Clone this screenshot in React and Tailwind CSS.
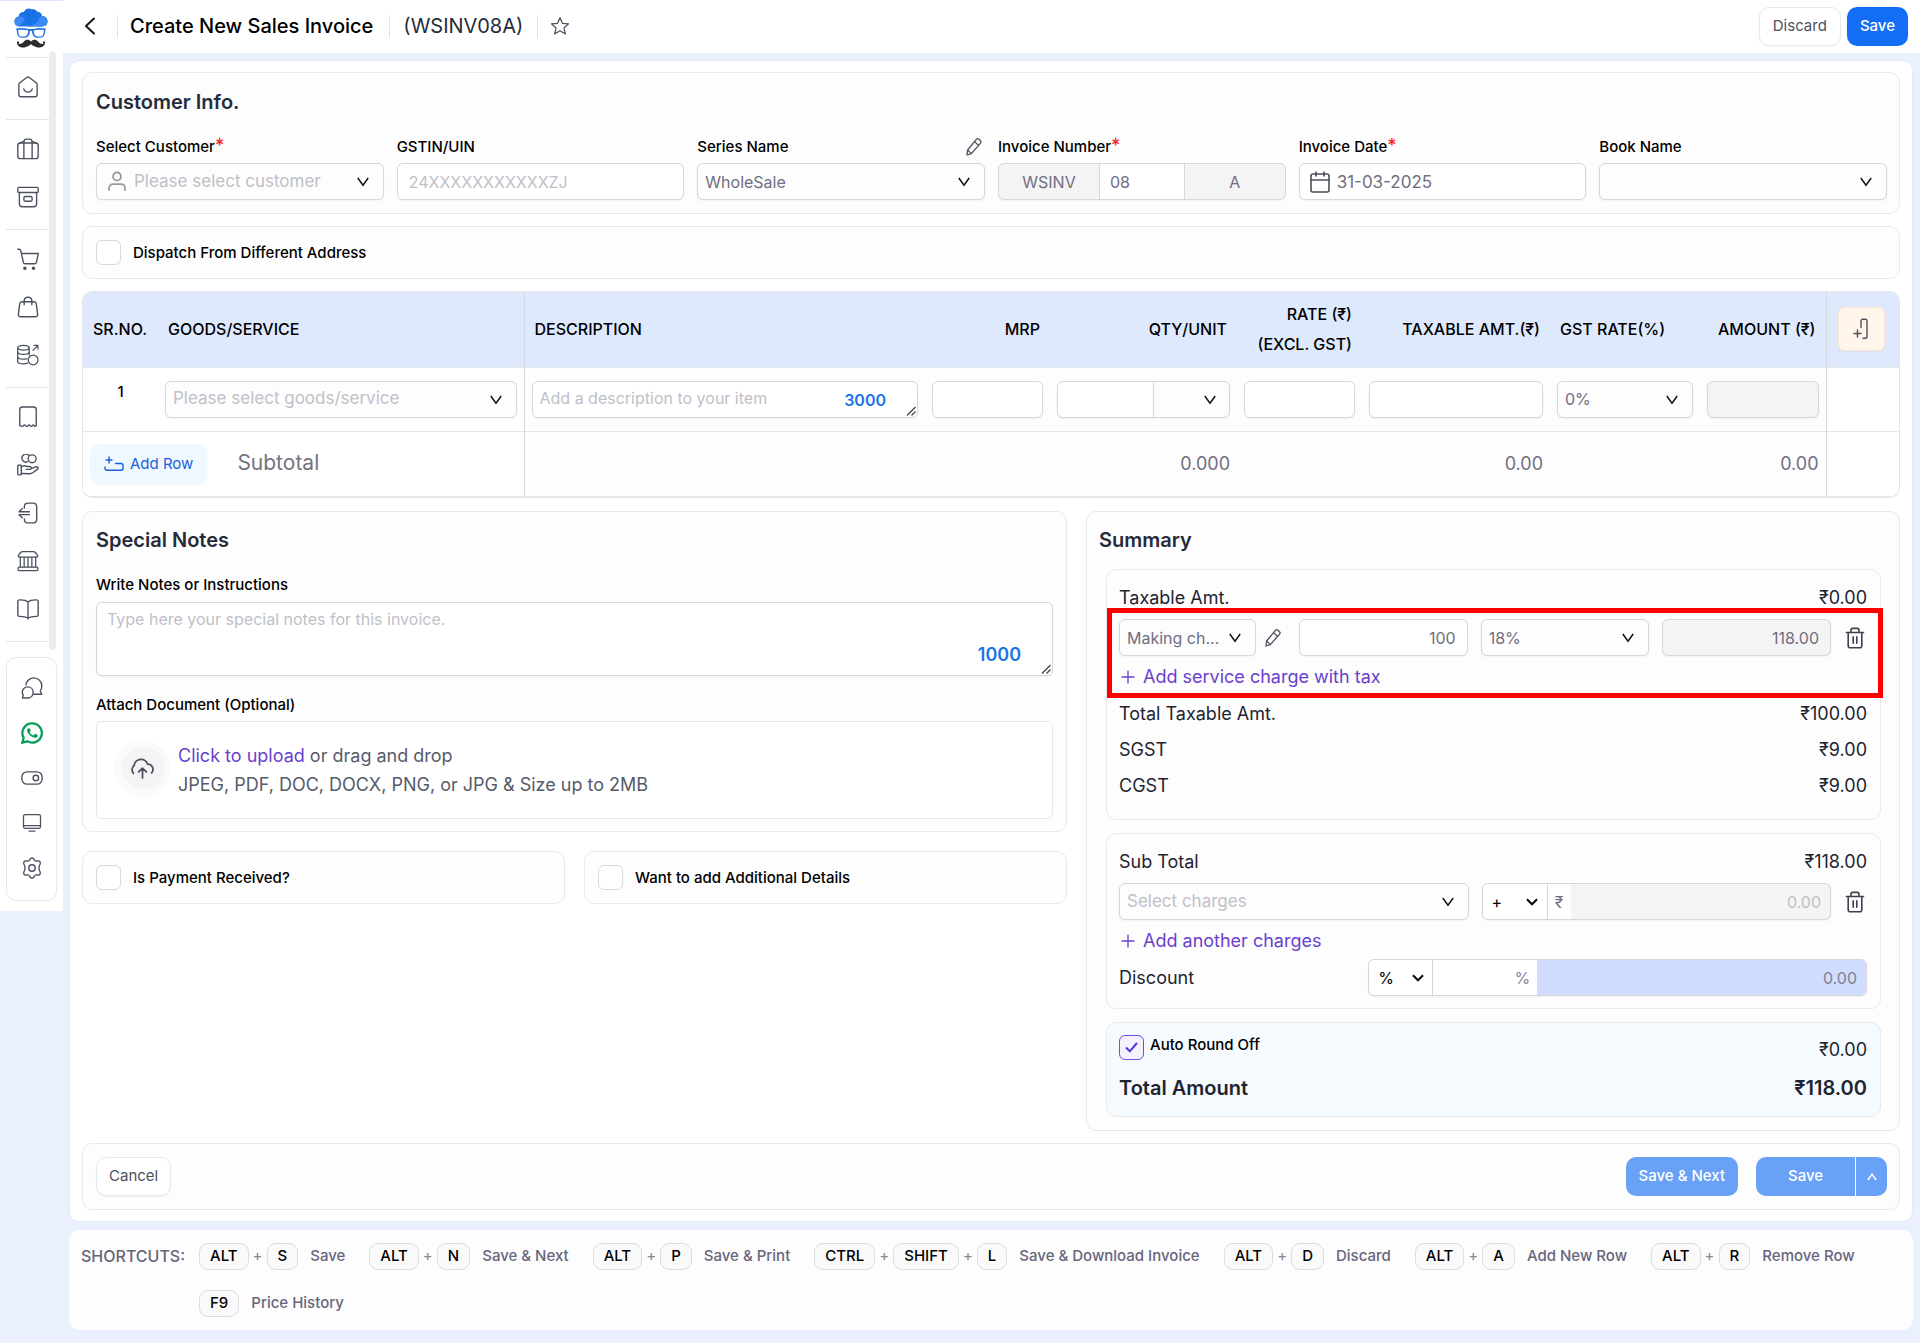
import React from "react";

/* ---------- icons ---------- */

function Icon({ size = 22, sw = 1.5, className = "", children }) {
  return (
    <svg
      width={size}
      height={size}
      viewBox="0 0 24 24"
      fill="none"
      stroke="currentColor"
      strokeWidth={sw}
      strokeLinecap="round"
      strokeLinejoin="round"
      className={className}
      aria-hidden="true"
    >
      {children}
    </svg>
  );
}

const HomeIcon = () => (
  <Icon>
    <path d="M2 9.600c0-.9.4-1.600 1.100-2.200L10.600 1.600c.9-.7 1.900-.7 2.800 0l7.500 5.800c.7.6 1.100 1.300 1.100 2.200v10.600c0 1.500-1 2.400-2.400 2.400H4.400C3 22.600 2 21.700 2 20.200z" />
    <path d="M7.400 14c.6 2.200 2.300 3.600 4.600 3.600s4-1.400 4.600-3.600" />
  </Icon>
);
const LuggageIcon = () => (
  <Icon>
    <rect x="0.900" y="5.500" width="22.200" height="17" rx="2.600" />
    <path d="M7.500 22.500V4.200C7.500 2.500 8.700 1.200 10.400 1.200h3.200c1.700 0 2.900 1.300 2.900 3v18.300" />
    <path d="M3.500 5.500c1-1 2.500-1.500 4-1.500M20.500 5.500c-1-1-2.500-1.500-4-1.500" />
  </Icon>
);
const ArchiveIcon = () => (
  <Icon>
    <rect x="0.900" y="1.500" width="22.200" height="5.600" rx="1" />
    <path d="M2.600 7.100v12.300c0 2 1.200 3.300 3.200 3.300h12.400c2 0 3.200-1.300 3.200-3.300V7.100" />
    <rect x="7.500" y="11.500" width="9" height="5.200" rx="1.600" />
  </Icon>
);
const CartIcon = () => (
  <Icon>
    <path d="M.8 1.400h1.700c.8 0 1.300.4 1.500 1.200l3 13c.2 1 .9 1.600 2 1.600h10.300c1 0 1.700-.6 1.900-1.600l2-9.600H4.900" />
    <circle cx="8.600" cy="22" r="1.200" fill="currentColor" />
    <circle cx="18" cy="22" r="1.200" fill="currentColor" />
  </Icon>
);
const BagIcon = () => (
  <Icon>
    <path d="M5.500 6.300h13c1.300 0 2.200.8 2.500 2.100l1.500 11.300c.2 1.800-.8 3-2.600 3H4.100c-1.800 0-2.800-1.200-2.600-3L3 8.400c.3-1.300 1.200-2.100 2.500-2.100z" />
    <path d="M7.800 9.500V5.600c0-2.500 1.700-4.300 4.200-4.300s4.200 1.800 4.200 4.300v3.900" />
  </Icon>
);
const CoinsIcon = () => (
  <Icon sw={1.4}>
    <ellipse cx="7" cy="4" rx="6.300" ry="2.600" />
    <path d="M.7 4v4.800c0 1.500 2.800 2.600 6.300 2.600s6.300-1.100 6.300-2.600V4" />
    <path d="M.7 9v5c0 1.500 2.800 2.600 6.300 2.600 1.400 0 2.700-.2 3.800-.5M13.300 9v3" />
    <path d="M.7 14v5c0 1.500 2.800 2.600 6.300 2.600 1.700 0 3.300-.3 4.500-.8" />
    <circle cx="17.600" cy="17.400" r="5.300" />
    <path d="M17.500 7l5-5.200M18.600 1.400h4.200v4" />
  </Icon>
);
const ReceiptIcon = () => (
  <Icon>
    <path d="M3 21.500V4c0-1.700 1.200-2.900 2.900-2.900h12.200C19.800 1.100 21 2.300 21 4v17.500c-.8.800-1.700.7-2.300-.2-.5-.7-1.500-.7-2 0-.8 1.300-2 1.300-2.700 0-.5-.8-1.500-.8-2 0-.8 1.300-2 1.300-2.700 0-.5-.7-1.400-.7-2 0-.9 1.400-2.200 1.200-4.300.2z" />
  </Icon>
);
const HandCoinsIcon = () => (
  <Icon>
    <path d="M11.500 8.400A4.300 4.300 0 1 1 13 1.700" />
    <circle cx="16.500" cy="5.200" r="4.300" />
    <rect x="0.800" y="12.300" width="3.900" height="10.500" rx="0.800" />
    <path d="M4.700 14.200c2-1.800 4-1.800 5.800-.6h3.300c2.200 0 2.300 3.200 0 3.200H10M15.400 16l4.900-1.900c2.300-.9 3.600 1.300 1.800 2.700l-4.500 3.400c-1.400 1-2.800 1.400-4.500 1.300l-8.400-.2" />
  </Icon>
);
const LogoutIcon = () => (
  <Icon>
    <path d="M8 6.500V5.300c0-2.500 1.700-4.100 4.200-4.100h5.100c2.500 0 4.200 1.600 4.200 4.100v13.400c0 2.500-1.700 4.100-4.200 4.100h-5.100c-2.500 0-4.200-1.600-4.200-4.100v-.2" />
    <path d="M13.500 10.600H2.200L5.800 7.200M13.500 13.800H2.200l3.600 3.400" />
  </Icon>
);
const BankIcon = () => (
  <Icon sw={1.4}>
    <path d="M1.500 5.800 4 2.700c.6-.7 1.200-1 2-1h12c.8 0 1.400.3 2 1l2.500 3.100c.6.900.2 1.900-.9 1.900H2.400c-1.100 0-1.500-1-.9-1.900z" />
    <rect x="1.200" y="18.600" width="21.600" height="3.900" rx="1.200" />
    <path d="M3.600 7.700v10.900M7.800 8v10.500M12 8v10.500M16.200 8v10.500M20.400 7.700v10.900" />
  </Icon>
);
const BookIcon = () => (
  <Icon>
    <path d="M12 4.500v18.300M12 4.500C10 2.600 6.500 1.900 2.500 2.100 1.500 2.200.9 2.900.9 3.800v14.700c0 .9.700 1.500 1.600 1.500 4.300.1 7.500.6 9.500 2.200 2-1.600 5.200-2.100 9.500-2.200.9 0 1.600-.6 1.600-1.500V3.800c0-.9-.6-1.600-1.600-1.700C17.500 1.900 14 2.600 12 4.500z" />
  </Icon>
);
const ChatIcon = () => (
  <Icon>
    <path d="M5.400 8.600C6 4.200 9.700 1 14 1c5 0 8.700 4 8.700 8.800 0 2.200-.5 4-1.700 5.700l1.800 3.300h-9" />
    <path d="M7.300 10.800c3.400 0 6 2.500 6 5.900 0 3.500-2.500 6.200-6 6.200H1.600l.8-3.300c-.7-.9-1-1.900-1-3 0-3.300 2.600-5.800 5.900-5.800z" />
  </Icon>
);
const WhatsappIcon = () => (
  <svg width="22" height="22" viewBox="0 0 24 24" aria-hidden="true">
    <path
      d="M12 1.500a10.500 10.500 0 0 0-9.100 15.700L1.500 22.500l5.500-1.400A10.500 10.500 0 1 0 12 1.500z"
      fill="none"
      stroke="#0a9f58"
      strokeWidth="2.500"
    />
    <path
      d="M8.700 6.700c.5-.1.8.1 1 .6l.8 1.900c.1.400 0 .7-.8 1.600-.3.300-.2.600 0 .9.800 1.300 1.900 2.200 3.300 2.800.4.200.7.100.9-.1l1-1.200c.3-.4.6-.4 1-.2l1.900.9c.5.300.6.500.5 1-.2 1.600-1.700 2.500-3.100 2.400-3.500-.4-7.900-4.100-8.600-7.700-.2-1.200.7-2.700 2.100-2.900z"
      fill="#0a9f58"
    />
  </svg>
);
const ToggleIcon = () => (
  <Icon>
    <rect x="1" y="5.300" width="22" height="13.400" rx="5.500" />
    <circle cx="16.200" cy="12" r="3" />
  </Icon>
);
const MonitorIcon = () => (
  <Icon size={20}>
    <rect x="1.800" y="2" width="20.400" height="16.500" rx="2" />
    <path d="M2 15.200h20M8.500 21.800h7" />
  </Icon>
);
const GearIcon = () => (
  <Icon>
    <circle cx="12" cy="12" r="3.500" />
    <path d="M9.800 2.300c1-1.700 3.400-1.700 4.400 0l.4.800c.6 1 1.700 1.500 2.900 1.300l1-.1c2-.2 3.200 1.800 2.300 3.600l-.7 1.400c-.5 1.200-.5 4.200 0 5.400l.7 1.400c.9 1.800-.3 3.800-2.300 3.600l-1-.1c-1.200-.2-2.300.3-2.900 1.300l-.4.800c-1 1.700-3.400 1.700-4.400 0l-.4-.8c-.6-1-1.700-1.500-2.900-1.300l-1 .1c-2 .2-3.200-1.800-2.300-3.600l.7-1.400c.5-1.200.5-4.200 0-5.400l-.7-1.400c-.9-1.800.3-3.800 2.300-3.600l1 .1c1.200.2 2.300-.3 2.900-1.300z" />
  </Icon>
);
const PencilIcon = () => (
  <svg width="18" height="20" viewBox="0 0 18 20" fill="none" stroke="#4b5160" strokeWidth="1.300" strokeLinejoin="round" aria-hidden="true">
    <path d="M11.600 2.200c.7-.7 1.700-.7 2.400 0l1.500 1.500c.7.700.7 1.700.1 2.400L6.400 16.600 2 18l.6-5z" />
    <path d="M9.600 4.600l4 3.900M6.400 16.600 2.600 13" />
  </svg>
);
const TrashIcon = () => (
  <svg width="20" height="22" viewBox="0 0 20 22" fill="none" stroke="#3c4250" strokeWidth="1.600" strokeLinecap="round" strokeLinejoin="round" aria-hidden="true">
    <path d="M1.500 5.500h17M3.200 5.500v13.200c0 1.200.8 2 2 2h9.600c1.200 0 2-.8 2-2V5.500" />
    <path d="M6 5.500V3.300c0-1.100.8-1.900 1.900-1.900h4.200c1.100 0 1.900.8 1.900 1.900v2.200M8.200 9.700v6.600M11.800 9.700v6.600" />
  </svg>
);
const Chevron = ({ className = "" }) => (
  <svg width="12" height="10" viewBox="0 0 12 10" fill="none" stroke="#111" strokeWidth="1.500" className={className} aria-hidden="true">
    <path d="M.8 1 6 8.200 11.200 1" />
  </svg>
);
const BoldChevron = ({ className = "" }) => (
  <svg width="12" height="8" viewBox="0 0 12 8" fill="none" stroke="#111" strokeWidth="2.200" className={className} aria-hidden="true">
    <path d="M1 1.200 6 6.200 11 1.200" />
  </svg>
);
const PlusIcon = () => (
  <svg width="14" height="14" viewBox="0 0 14 14" stroke="currentColor" strokeWidth="1.300" aria-hidden="true">
    <path d="M7 .5v13M.5 7h13" />
  </svg>
);
const Grip = () => (
  <svg width="10" height="10" viewBox="0 0 10 10" stroke="#444" strokeWidth="1.300" className="pointer-events-none absolute right-[2px] bottom-[2px] bg-white" aria-hidden="true">
    <path d="M1 9.500 9.500 1M5.500 9.500l4-4" />
  </svg>
);

const Logo = () => (
  <svg width="34" height="41" viewBox="0 0 34 41" aria-label="Logo" role="img">
    <path d="M6 18.500C2 18.500.5 16 .5 13.500c0-2.500 1.500-4.500 4-5C5 5 7.500 3.500 10 4c1.500-3.500 5-4.300 7.500-2.500 2-.8 4.500 0 5.500 2 3 .2 5 2 5 4.500 3.500 0 5.500 2.500 5.500 5.300 0 3.200-2 5.200-5.500 5.200z" fill="#1a73e8" />
    <path d="M4.500 8.500c3-.5 5 .5 6.500 3l-6 7C2 18 .5 16 .5 13.500c0-2.500 1.500-4.500 4-5z" fill="#3b8bf0" />
    <path d="M28 8c3.500 0 5.500 2.500 5.500 5.300 0 3.200-2 5.200-5.500 5.200H13c6-1 9.500-2.500 11-6 1-2.500 2-4 4-4.500z" fill="#3b8bf0" />
    <path d="M10 4c3 0 5 2 5.500 5" stroke="#0d5bd0" strokeWidth="0.800" fill="none" />
    <path d="M17.500 1.500c2 1.500 2.500 4 1.500 7.500" stroke="#0d5bd0" strokeWidth="0.800" fill="none" />
    <path d="M2 20.500c4-.8 8.500-.8 12.500.5h5c4-1.300 8.500-1.300 12.500-.5l-.8 2.600c-.3 4.400-1.700 6.700-5.200 6.700h-2.200c-3.500 0-5.500-2.200-5.900-6.800h-1.800c-.4 4.600-2.400 6.800-5.900 6.800H8c-3.500 0-4.900-2.300-5.200-6.700z" fill="#2176e8" />
    <path d="M4.200 22c3.400-.5 7-.4 10.100.5-.2 4.300-2 6.100-4.500 6.100H8C5.200 28.600 4.200 26.300 4.200 22zM29.800 22c-3.400-.5-7-.4-10.100.5.2 4.300 2 6.100 4.500 6.100H26c2.800 0 3.800-2.300 3.800-6.600z" fill="#fff" />
    <path d="M17 33.400c-2-2.200-5.200-2.200-7 0-1.600 2-4 3-5.800 1.800 1-.3 1.200-1.200.5-1.800-.9-.6-2 .2-1.700 1.800.5 3 4 4.700 7.500 4.200 3-.4 5-1.700 6.500-3.300 1.500 1.600 3.500 2.900 6.500 3.300 3.500.5 7-1.200 7.500-4.200.3-1.600-.8-2.400-1.700-1.800-.7.600-.5 1.500.5 1.800-1.800 1.200-4.200.2-5.800-1.800-1.800-2.200-5-2.200-7 0z" fill="#2b2b30" />
  </svg>
);

/* ---------- form parts ---------- */

const BOX = "h-[37px] rounded-md border border-[#d6d6dc] shadow-xs outline-none";

function TextBox({ className = "", bg = "bg-white", size = "text-base", ...props }) {
  return (
    <input
      type="text"
      className={`${BOX} ${bg} ${size} w-full min-w-0 px-[11px] text-[#706e82] placeholder:text-[#c0c0c9] ${className}`}
      {...props}
    />
  );
}

function SelectBox({ id, label, value, placeholder, className = "", padding = "pl-[7px]" }) {
  return (
    <div className={`relative ${className}`}>
      <select
        id={id}
        aria-label={label}
        defaultValue="v"
        className={`${BOX} w-full appearance-none bg-[#fdfdfd] pr-8 ${padding} ${placeholder ? "text-[17px] text-[#c0c0c9]" : "text-base text-[#706e82]"}`}
      >
        <option value="v">{value || placeholder}</option>
      </select>
      <Chevron className="pointer-events-none absolute top-[14px] right-[15px]" />
    </div>
  );
}

function Label({ htmlFor, children, required }) {
  return (
    <label htmlFor={htmlFor} className="text-[15px] leading-[22px] font-medium text-black">
      {children}
      {required && <span className="text-lg leading-[18px] text-[#ff1a1a]">*</span>}
    </label>
  );
}

function CheckCard({ id, children }) {
  return (
    <div className="flex h-[53px] items-center gap-3 rounded-[10px] border border-[#e9e9ec] bg-[#fdfdfd] px-[13px]">
      <input id={id} type="checkbox" className="size-[25px] shrink-0 appearance-none rounded-md border border-[#d8d8dd] bg-white" />
      <Label htmlFor={id}>{children}</Label>
    </div>
  );
}

const Title = ({ children, className = "" }) => (
  <h2 className={`text-xl leading-7 font-semibold text-[#262b3a] ${className}`}>{children}</h2>
);

/* ---------- page parts ---------- */

const groups = [
  [["Home", HomeIcon]],
  [["Products", LuggageIcon], ["Inventory", ArchiveIcon]],
  [["Sales", CartIcon], ["Purchase", BagIcon], ["Payments", CoinsIcon]],
  [["Receipts", ReceiptIcon], ["Expenses", HandCoinsIcon], ["Returns", LogoutIcon], ["Bank", BankIcon], ["Ledger", BookIcon]],
];
const tools = [["Chat", ChatIcon], ["WhatsApp", WhatsappIcon], ["Switch", ToggleIcon], ["Display", MonitorIcon], ["Settings", GearIcon]];

function Sidebar() {
  return (
    <aside className="w-[63px] shrink-0 self-start border-t border-[#dfe8fb] bg-white pb-[10px] text-[#4b5160]">
      <a href="#" className="ml-[14px] flex h-[50px] items-center pt-1" aria-label="Home page">
        <Logo />
      </a>
      <nav className="ml-1.5 flex">
        <div className="w-[43px] pt-1.5 pb-2">
          {groups.map((g, i) => (
            <div key={i} className="border-t border-[#e4e4e7] pt-[5px] pb-2">
              {g.map(([name, I]) => (
                <a key={name} href="#" aria-label={name} className="flex h-12 items-center justify-center">
                  <I />
                </a>
              ))}
            </div>
          ))}
          <div className="border-t border-[#e4e4e7]" />
        </div>
        <div className="w-[7px] rounded-full bg-[#ececec]" />
      </nav>
      <div className="mx-1.5 mt-[7px] rounded-[10px] border border-[#e9e9ec] pt-[7px] pb-2.5">
        {tools.map(([name, I]) => (
          <button key={name} type="button" aria-label={name} className="flex h-[45px] w-full items-center justify-center">
            <I />
          </button>
        ))}
      </div>
    </aside>
  );
}

function Header() {
  return (
    <header className="flex h-[53px] items-center bg-white pr-3 pb-px pl-[20px]">
      <button type="button" aria-label="Back" className="flex w-[14px] justify-center">
        <svg width="12" height="18" viewBox="0 0 12 18" fill="none" stroke="#15171e" strokeWidth="2" strokeLinecap="round" strokeLinejoin="round">
          <path d="M10 1.500 2 9l8 7.500" />
        </svg>
      </button>
      <span className="ml-5 h-[23px] w-px bg-[#e2e2e6]" />
      <h1 className="ml-3 text-xl font-medium text-black">Create New Sales Invoice</h1>
      <span className="ml-4 h-[23px] w-px bg-[#e2e2e6]" />
      <span className="ml-[13px] text-xl text-[#262b3a]">(WSINV08A)</span>
      <span className="ml-[14px] h-[23px] w-px bg-[#e2e2e6]" />
      <button type="button" aria-label="Favourite" className="ml-3 text-[#4b5160]">
        <Icon size={20}>
          <path d="M12 2l2.900 6.800 7.400.6-5.600 4.900 1.700 7.200L12 17.700l-6.400 3.800 1.700-7.200L1.700 9.400l7.400-.6z" />
        </Icon>
      </button>
      <button type="button" className="ml-auto h-[39px] rounded-[10px] border border-[#e9e9ec] bg-white px-[13px] text-[15px] text-[#4b5160] shadow-xs">
        Discard
      </button>
      <button type="button" className="ml-1.5 h-[39px] rounded-[10px] bg-[#146ef5] px-[13px] text-[15px] font-medium text-white">
        Save
      </button>
    </header>
  );
}

function CustomerInfo() {
  return (
    <section className="rounded-[10px] border border-[#e9e9ec] bg-[#fdfdfd] pt-[15px] pr-3 pb-[13px] pl-[13px]">
      <Title className="mb-5">Customer Info.</Title>
      <div className="grid grid-cols-6 gap-[13px]">
        <div className="flex flex-col gap-[5px]">
          <Label htmlFor="customer" required>Select Customer</Label>
          <div className="relative">
            <SelectBox id="customer" placeholder="Please select customer" padding="pl-[37px]" />
            <svg width="18" height="20" viewBox="0 0 18 20" fill="none" stroke="#9a9aa4" strokeWidth="1.800" strokeLinecap="round" className="pointer-events-none absolute top-[8px] left-[12px]" aria-hidden="true">
              <circle cx="9" cy="5.500" r="4" />
              <path d="M1 19v-1.500C1 15 2.800 13.200 5.300 13.200h7.400c2.500 0 4.300 1.800 4.300 4.300V19" />
            </svg>
          </div>
        </div>
        <div className="flex flex-col gap-[5px]">
          <Label htmlFor="gstin">GSTIN/UIN</Label>
          <TextBox id="gstin" placeholder="24XXXXXXXXXXXZJ" />
        </div>
        <div className="flex flex-col gap-[5px]">
          <div className="flex h-[22px] items-center justify-between pr-0.5">
            <Label htmlFor="series">Series Name</Label>
            <button type="button" aria-label="Edit series">
              <PencilIcon />
            </button>
          </div>
          <SelectBox id="series" value="WholeSale" />
        </div>
        <div className="flex flex-col gap-[5px]">
          <Label htmlFor="number" required>Invoice Number</Label>
          <div className={`${BOX} flex overflow-hidden bg-[#f4f4f4] text-base text-[#706e82]`}>
            <input aria-label="Invoice prefix" defaultValue="WSINV" readOnly className="w-[35%] text-center" />
            <input id="number" defaultValue="08" className="w-[30%] border-x border-[#d6d6dc] bg-white px-2.5" />
            <input aria-label="Invoice suffix" defaultValue="A" readOnly className="w-[35%] text-center" />
          </div>
        </div>
        <div className="flex flex-col gap-[5px]">
          <Label htmlFor="date" required>Invoice Date</Label>
          <div className="relative">
            <TextBox id="date" defaultValue="31-03-2025" size="text-[17px]" className="pl-[37px]" />
            <svg width="20" height="22" viewBox="0 0 20 22" fill="none" stroke="#4b4f5a" strokeWidth="1.600" strokeLinecap="round" className="pointer-events-none absolute top-[8px] left-[11px]" aria-hidden="true">
              <rect x="1" y="3" width="18" height="18" rx="2" />
              <path d="M1 9h18M6 1v4M14 1v4" />
            </svg>
          </div>
        </div>
        <div className="flex flex-col gap-[5px]">
          <Label htmlFor="book">Book Name</Label>
          <SelectBox id="book" value=" " />
        </div>
      </div>
    </section>
  );
}

const TH = "px-2.5 text-base leading-[30px] font-medium text-black";

function ItemsTable() {
  return (
    <div className="overflow-hidden rounded-[10px] border border-b-2 border-[#e6e6ea]">
      <table className="w-full table-fixed border-collapse">
        <colgroup>
          <col className="w-[75px]" />
          <col className="w-[366px]" />
          <col className="w-[401px]" />
          <col className="w-[125px]" />
          <col className="w-[187px]" />
          <col className="w-[125px]" />
          <col className="w-[188px]" />
          <col className="w-[150px]" />
          <col className="w-[126px]" />
          <col className="w-[73px]" />
        </colgroup>
        <thead>
          <tr className="h-[75px] border-b border-[#e6e6ea] bg-[#dfe9fe]">
            <th className={`${TH} text-left whitespace-nowrap`}>SR.NO.</th>
            <th className={`${TH} border-r border-[#d6d8df] text-left`}>GOODS/SERVICE</th>
            <th className={`${TH} text-left`}>DESCRIPTION</th>
            <th className={`${TH} text-right`}>MRP</th>
            <th className={`${TH} text-right`}>QTY/UNIT</th>
            <th className={`${TH} text-right whitespace-nowrap`}>
              RATE (₹)
              <br />
              (EXCL. GST)
            </th>
            <th className={`${TH} text-right whitespace-nowrap`}>TAXABLE AMT.(₹)</th>
            <th className={`${TH} text-left whitespace-nowrap`}>GST RATE(%)</th>
            <th className={`${TH} border-r border-[#d6d8df] text-right whitespace-nowrap`}>AMOUNT (₹)</th>
            <th className="pl-[11px]">
              <button type="button" aria-label="Add column" className="flex h-[44px] w-[47px] items-center justify-center rounded-md border border-[#fde6cf] bg-[#fff5eb] text-[#4b5160] shadow-xs">
                <svg width="16" height="22" viewBox="0 0 16 22" fill="none" stroke="currentColor" strokeWidth="1.400" strokeLinecap="round" aria-hidden="true">
                  <path d="M8 9.500V3c0-1 .8-1.800 1.800-1.800h2.400c1 0 1.800.8 1.800 1.800v15.500c0 1-.8 1.800-1.800 1.800H10M1 15.500h7M4.500 12v7" />
                </svg>
              </button>
            </th>
          </tr>
        </thead>
        <tbody>
          <tr className="h-[64px] border-b border-[#e6e6ea] bg-[#fdfdfd] [&>td]:px-[7px]">
            <td className="bg-white pt-3 text-center align-top text-[15px] leading-6 font-medium text-black">1</td>
            <td className="border-r border-[#d6d8df] bg-white">
              <SelectBox label="Goods or service" placeholder="Please select goods/service" />
            </td>
            <td>
              <div className="relative flex">
                <textarea
                  aria-label="Description"
                  placeholder="Add a description to your item"
                  className={`${BOX} w-full resize-none bg-white px-[7px] py-1 text-base text-[#706e82] placeholder:text-[#c0c0c9]`}
                />
                <span className="pointer-events-none absolute top-[7px] right-[32px] text-base font-semibold text-[#1a73e8]">3000</span>
                <Grip />
              </div>
            </td>
            <td><TextBox aria-label="MRP" /></td>
            <td>
              <div className="flex">
                <TextBox aria-label="Quantity" className="rounded-r-none" />
                <div className="relative -ml-px w-[77px] shrink-0">
                  <select aria-label="Unit" className={`${BOX} w-full appearance-none rounded-l-none bg-[#fdfdfd]`}>
                    <option> </option>
                  </select>
                  <Chevron className="pointer-events-none absolute top-[14px] right-[14px]" />
                </div>
              </div>
            </td>
            <td><TextBox aria-label="Rate" /></td>
            <td><TextBox aria-label="Taxable amount" /></td>
            <td><SelectBox label="GST rate" value="0%" /></td>
            <td className="border-r border-[#d6d8df]">
              <TextBox aria-label="Amount" readOnly bg="bg-[#f4f4f4]" />
            </td>
            <td className="bg-white" />
          </tr>
          <tr className="h-[65px] bg-[#fdfdfd] text-lg text-[#706e82] [&>td]:px-[7px]">
            <td colSpan={2} className="border-r border-[#d6d8df] bg-white">
              <div className="flex items-center gap-[30px] text-[#73747e]">
                <button type="button" className="flex h-10 items-center gap-1.5 rounded-[10px] bg-[#eff7ff] px-[14px] text-[15px] text-[#1a5fe0] shadow-xs">
                  <svg width="20" height="16" viewBox="0 0 20 16" fill="none" stroke="currentColor" strokeWidth="1.400" strokeLinecap="round" aria-hidden="true">
                    <path d="M5 1v6M2 4h6M11.500 7.500h5.500c1 0 2 .8 2 1.800v3.200c0 1-1 1.800-2 1.800H3c-1 0-2-.8-2-1.800V11" />
                  </svg>
                  Add Row
                </button>
                <span className="text-[21px]">Subtotal</span>
              </div>
            </td>
            <td />
            <td />
            <td className="text-right">0.000</td>
            <td />
            <td className="text-right">0.00</td>
            <td />
            <td className="border-r border-[#d6d8df] text-right">0.00</td>
            <td className="bg-white" />
          </tr>
        </tbody>
      </table>
    </div>
  );
}

function Notes() {
  return (
    <section className="rounded-[10px] border border-[#e9e9ec] bg-[#fdfdfd] px-[13px] pt-[14px] pb-3">
      <Title className="mb-[18px]">Special Notes</Title>
      <Label htmlFor="notes">Write Notes or Instructions</Label>
      <div className="relative mt-1.5 mb-4 flex">
        <textarea
          id="notes"
          placeholder="Type here your special notes for this invoice."
          className="h-[74px] w-full resize-none rounded-md border border-[#d6d6dc] bg-white px-2.5 py-1 text-base text-[#706e82] shadow-xs outline-none placeholder:text-[#c0c0c9]"
        />
        <span className="pointer-events-none absolute right-[32px] bottom-[7px] text-lg font-semibold text-[#1a73e8]">1000</span>
        <Grip />
      </div>
      <Label htmlFor="file">Attach Document (Optional)</Label>
      <div className="mt-[5px] flex h-[98px] items-center gap-[7px] rounded-md border border-[#e6e6ea] bg-white pl-[17px]">
        <span className="mb-1 flex size-[57px] items-center justify-center rounded-full bg-[#fafafa]">
          <span className="flex size-[42px] items-center justify-center rounded-full bg-[#f4f4f4] text-[#4b5160]">
            <Icon size={25} sw={1.700}>
              <path d="M3.300 16.600A5 5 0 0 1 4 9.200 6.600 6.600 0 0 1 16.900 7.900a5 5 0 0 1 3.900 8.300M12 21v-9M8.300 15.300 12 11.700l3.700 3.600" />
            </Icon>
          </span>
        </span>
        <div className="text-lg leading-[29px] text-[#565b69]">
          <label htmlFor="file" className="text-[#6a3fce]">Click to upload</label> or drag and drop
          <input id="file" type="file" className="sr-only" />
          <div>JPEG, PDF, DOC, DOCX, PNG, or JPG &amp; Size up to 2MB</div>
        </div>
      </div>
    </section>
  );
}

const Row = ({ label, value }) => (
  <div className="flex h-9 items-center justify-between">
    <span>{label}</span>
    <span>{value}</span>
  </div>
);

const AddLink = ({ children }) => (
  <button type="button" className="mt-[3px] flex h-9 items-center gap-2 pl-0.5 text-[#6a3fce]">
    <PlusIcon />
    {children}
  </button>
);

const INNER = "rounded-[10px] border border-[#e9e9ec] pl-3 pr-[13px]";

function Summary() {
  return (
    <section className="rounded-[10px] border border-[#e9e9ec] bg-[#fdfdfd] pt-[14px] pr-[18px] pb-[13px] pl-[19px] text-lg text-[#1f2430]">
      <Title className="-ml-[7px] mb-[15px]">Summary</Title>

      <div className={`${INNER} pt-2.5 pb-[15px]`}>
        <Row label="Taxable Amt." value="₹0.00" />
        <div className="relative pt-[3px] pb-px">
          <div className="pointer-events-none absolute -top-2 -right-4 -bottom-0.5 -left-3 border-5 border-[#ff0000]" />
          <div className="flex items-center">
            <SelectBox label="Service charge" value="Making ch..." className="w-[137px]" />
            <button type="button" aria-label="Edit charge" className="w-[43px] pl-2">
              <PencilIcon />
            </button>
            <div className="grid flex-1 grid-cols-3 gap-[13px]">
              <TextBox aria-label="Charge amount" defaultValue="100" className="text-right" />
              <SelectBox label="Charge tax" value="18%" />
              <TextBox aria-label="Charge total" defaultValue="118.00" readOnly bg="bg-[#f4f4f4]" className="text-right" />
            </div>
            <button type="button" aria-label="Remove charge" className="ml-3 flex w-6 justify-center">
              <TrashIcon />
            </button>
          </div>
          <AddLink>Add service charge with tax</AddLink>
        </div>
        <Row label="Total Taxable Amt." value="₹100.00" />
        <Row label="SGST" value="₹9.00" />
        <Row label="CGST" value="₹9.00" />
      </div>

      <div className={`${INNER} mt-[13px] pt-2.5 pb-3`}>
        <Row label="Sub Total" value="₹118.00" />
        <div className="mt-[3px] flex items-center">
          <div className="grid flex-1 grid-cols-2 gap-[13px]">
            <SelectBox label="Charges" placeholder="Select charges" />
            <div className={`${BOX} flex overflow-hidden bg-[#f4f4f4] text-base`}>
              <div className="relative w-[65px] shrink-0 border-r border-[#d6d6dc] bg-white">
                <select aria-label="Sign" className="size-full appearance-none pl-[9px] text-black outline-none">
                  <option>+</option>
                </select>
                <BoldChevron className="pointer-events-none absolute top-[14px] right-[9px]" />
              </div>
              <span className="flex w-[23px] shrink-0 items-center justify-center bg-white text-[#706e82]">₹</span>
              <input aria-label="Other charge" placeholder="0.00" className="w-0 flex-1 pr-[9px] text-right outline-none placeholder:text-[#c0c0c9]" />
            </div>
          </div>
          <button type="button" aria-label="Remove charges" className="ml-3 flex w-6 justify-center">
            <TrashIcon />
          </button>
        </div>
        <AddLink>Add another charges</AddLink>
        <div className="flex items-center justify-between">
          <label htmlFor="discount">Discount</label>
          <div className={`${BOX} flex w-2/3 overflow-hidden bg-white text-base`}>
            <div className="relative w-[64px] shrink-0 border-r border-[#d6d6dc]">
              <select aria-label="Discount type" className="size-full appearance-none pl-[9px] text-black outline-none">
                <option>%</option>
              </select>
              <BoldChevron className="pointer-events-none absolute top-[14px] right-[8px]" />
            </div>
            <input id="discount" className="w-[74px] px-2 outline-none" />
            <span className="flex w-[30px] shrink-0 items-center justify-center text-[#8a8894]">%</span>
            <input aria-label="Discount amount" defaultValue="0.00" readOnly className="w-0 flex-1 bg-[#d1ddfe] pr-[9px] text-right text-[#807f92] outline-none" />
          </div>
        </div>
      </div>

      <div className={`${INNER} mt-[13px] bg-[#f5faff] pt-[9px] pb-2.5`}>
        <div className="flex h-9 items-start">
          <span className="relative mt-[3px] flex">
            <input id="round" type="checkbox" defaultChecked className="size-[25px] appearance-none rounded-md border border-[#6a4fe8] bg-[#f6f1ff]" />
            <svg width="13" height="11" viewBox="0 0 13 11" fill="none" stroke="#4f35e0" strokeWidth="2" className="pointer-events-none absolute top-[7px] left-[6px]" aria-hidden="true">
              <path d="M1 5.500 4.800 9.300 12 1" />
            </svg>
          </span>
          <span className="mt-0.5 ml-1.5 flex">
            <Label htmlFor="round">Auto Round Off</Label>
          </span>
          <span className="ml-auto self-center">₹0.00</span>
        </div>
        <div className="mt-0.5 flex h-9 items-center justify-between text-xl font-semibold">
          <span>Total Amount</span>
          <span>₹118.00</span>
        </div>
      </div>
    </section>
  );
}

const BLUE = "h-[39px] bg-[#68a1f5] text-[15px] font-medium text-white";

function Actions() {
  return (
    <section className="flex items-center rounded-[10px] border border-[#e9e9ec] bg-[#fdfdfd] py-[13px] pr-3 pl-[13px]">
      <button type="button" className="h-[39px] rounded-[10px] border border-[#e9e9ec] bg-white px-3 text-[15px] text-[#4b5160] shadow-xs">
        Cancel
      </button>
      <button type="button" className={`${BLUE} ml-auto rounded-[10px] px-[13px]`}>Save &amp; Next</button>
      <button type="button" className={`${BLUE} ml-[18px] w-[99px] rounded-l-[10px]`}>Save</button>
      <button type="button" aria-label="More save options" className={`${BLUE} ml-px flex w-[31px] items-center justify-center rounded-r-[10px]`}>
        <svg width="10" height="8" viewBox="0 0 10 8" fill="none" stroke="currentColor" strokeWidth="1.500" aria-hidden="true">
          <path d="M.8 7 5 1.200 9.200 7" />
        </svg>
      </button>
    </section>
  );
}

const shortcuts = [
  [["ALT", "S"], "Save"],
  [["ALT", "N"], "Save & Next"],
  [["ALT", "P"], "Save & Print"],
  [["CTRL", "SHIFT", "L"], "Save & Download Invoice"],
  [["ALT", "D"], "Discard"],
  [["ALT", "A"], "Add New Row"],
  [["ALT", "R"], "Remove Row"],
  [["F9"], "Price History"],
];

function Shortcuts() {
  return (
    <footer className="mt-2 flex gap-[13px] rounded-[10px] bg-[#fdfdfd] px-3 py-[13px] text-[15px] font-medium">
      <span className="w-[105px] shrink-0 text-base leading-[27px] text-[#67657c]">SHORTCUTS:</span>
      <ul className="flex flex-wrap gap-x-6 gap-y-5">
        {shortcuts.map(([keys, label]) => (
          <li key={label} className="flex items-center text-[#67657c]">
            {keys.map((k, i) => (
              <React.Fragment key={k}>
                {i > 0 && <span className="w-[18px] text-center font-normal text-[#8a8894]">+</span>}
                <kbd className="flex h-[27px] items-center rounded-[9px] border border-[#dcdce1] bg-[#fafafa] px-2.5 font-[Inter] text-black">{k}</kbd>
              </React.Fragment>
            ))}
            <span className="ml-3">{label}</span>
          </li>
        ))}
      </ul>
    </footer>
  );
}

export default function App() {
  return (
    <div className="flex min-h-screen bg-[#eaf0fe] font-[Inter,sans-serif]">
      <Sidebar />
      <div className="min-w-0 flex-1">
        <Header />
        <main className="mt-[7px] mr-[7px] ml-1.5">
          <div className="rounded-[10px] border border-[#e3e9f6] bg-white px-3 pt-[11px] pb-[11px]">
            <CustomerInfo />
            <div className="mt-3">
              <CheckCard id="dispatch">Dispatch From Different Address</CheckCard>
            </div>
            <div className="mt-3">
              <ItemsTable />
            </div>
            <div className="mt-[13px] grid grid-cols-[985fr_814fr] items-start gap-[19px]">
              <div>
                <Notes />
                <div className="mt-[19px] grid grid-cols-2 gap-[19px]">
                  <CheckCard id="paid">Is Payment Received?</CheckCard>
                  <CheckCard id="details">Want to add Additional Details</CheckCard>
                </div>
              </div>
              <Summary />
            </div>
            <div className="mt-3">
              <Actions />
            </div>
          </div>
          <Shortcuts />
        </main>
      </div>
    </div>
  );
}
